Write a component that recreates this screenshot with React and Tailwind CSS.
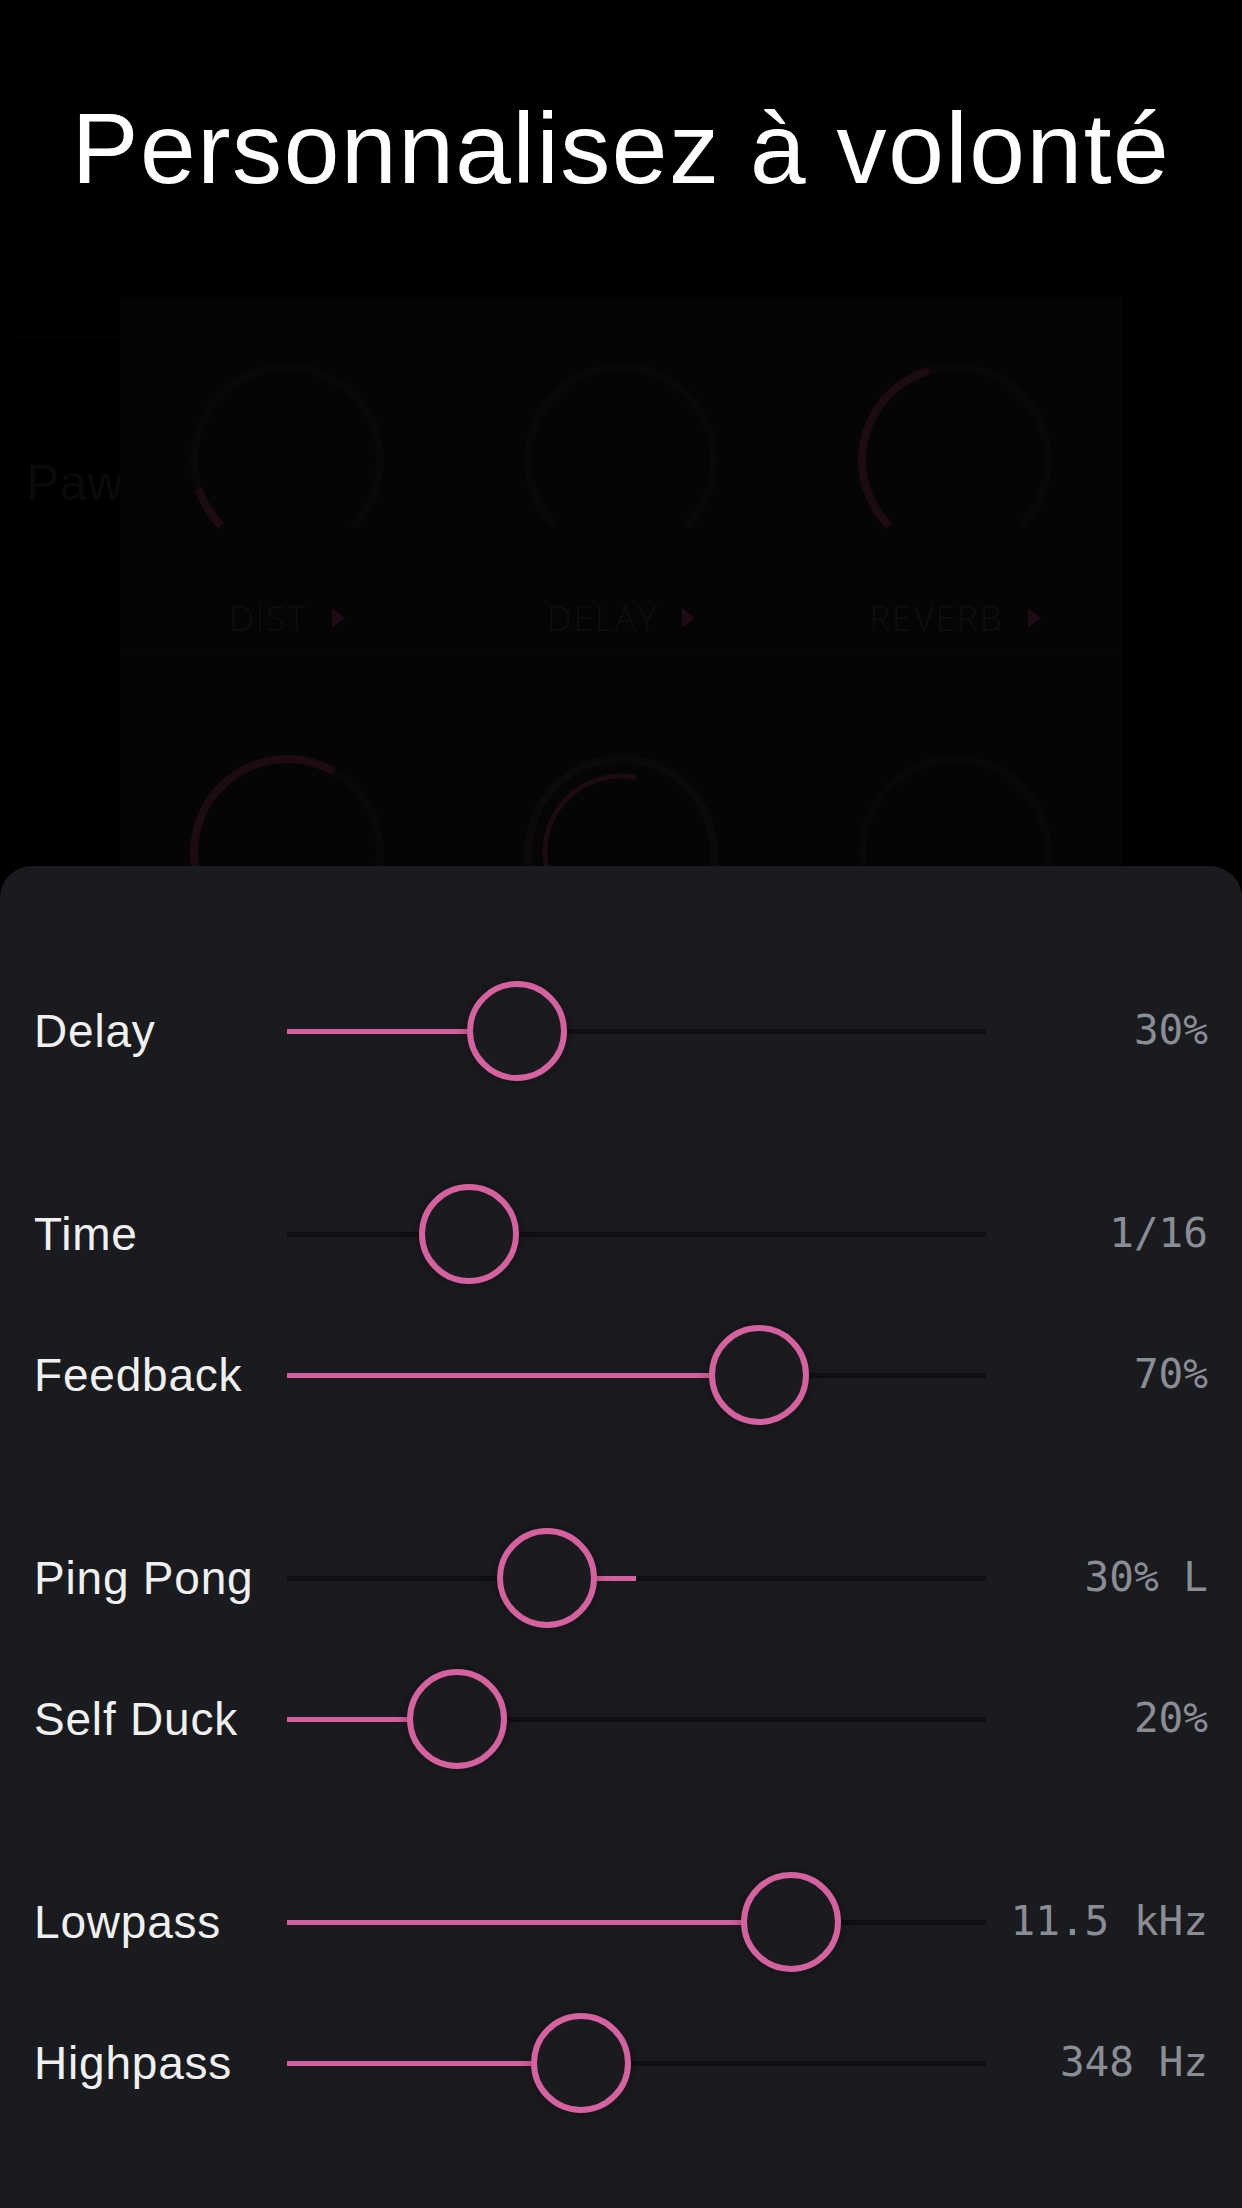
import React from 'react';

const SANS = { fontFamily: '"Liberation Sans", Arial, sans-serif' };
const MONO = { fontFamily: '"DejaVu Sans Mono", "Liberation Mono", monospace' };

// background synth knobs (dimmed behind the sheet)
const knobsTop = [
  { label: 'DIST', value: 0.1 },
  { label: 'DELAY', value: 0 },
  { label: 'REVERB', value: 0.44 },
];

const knobsBottom = [
  { value: 0.61 },
  { value: 0.54, inner: true },
  { value: 0 },
];

const sliders = [
  [{ label: 'Delay', value: '30%', pos: 0.3, fill: 'start' }],
  [
    { label: 'Time', value: '1/16', pos: 0.22, fill: 'none' },
    { label: 'Feedback', value: '70%', pos: 0.705, fill: 'start' },
  ],
  [
    { label: 'Ping Pong', value: '30% L', pos: 0.35, fill: 'center' },
    { label: 'Self Duck', value: '20%', pos: 0.2, fill: 'start' },
  ],
  [
    { label: 'Lowpass', value: '11.5 kHz', pos: 0.758, fill: 'start' },
    { label: 'Highpass', value: '348 Hz', pos: 0.407, fill: 'start' },
  ],
];

const TRACK_W = 699;
const THUMB = 100;

const Knob = ({ value, inner }) => {
  const r = 93;
  const c = 2 * Math.PI * r;
  const ri = 76;
  const ci = 2 * Math.PI * ri;
  return (
    <svg width="200" height="200" viewBox="0 0 200 200">
      <circle
        cx="100" cy="100" r={r} fill="none"
        stroke={inner ? '#090a0c' : '#080808'} strokeWidth="8"
        strokeDasharray={`${0.75 * c} ${c}`}
        transform="rotate(135 100 100)"
      />
      {!inner && value > 0 && (
        <circle
          cx="100" cy="100" r={r} fill="none"
          stroke="#1d0b14" strokeWidth="8"
          strokeDasharray={`${value * 0.75 * c} ${c}`}
          transform="rotate(135 100 100)"
        />
      )}
      {inner && (
        <circle
          cx="100" cy="100" r={ri} fill="none"
          stroke="#1d0b14" strokeWidth="5"
          strokeDasharray={`${value * 0.75 * ci} ${ci}`}
          transform="rotate(135 100 100)"
        />
      )}
    </svg>
  );
};

const Slider = ({ label, value, pos, fill }) => {
  const center = THUMB / 2 + pos * (TRACK_W - THUMB);
  const mid = TRACK_W / 2;
  let fillStyle = null;
  if (fill === 'start') fillStyle = { left: 0, width: center };
  if (fill === 'center') {
    fillStyle = center < mid
      ? { left: center, width: mid - center }
      : { left: mid, width: center - mid };
  }

  return (
    <div className="flex items-center h-[100px]">
      <div className="w-[253px] text-[46px] tracking-[0.8px] text-[#f0f0f0]" style={SANS}>
        {label}
      </div>
      <div className="relative w-[699px] h-[100px] flex items-center">
        <div className="w-full h-[5px] bg-[#0e0f11]" />
        {fillStyle && (
          <div className="absolute top-[47.5px] h-[5px] bg-[#d5619f]" style={fillStyle} />
        )}
        <div
          className="absolute top-0 w-[100px] h-[100px] rounded-full border-[6px] border-[#d5619f] bg-[#1a1b1f] shadow-[0_0_14px_rgba(0,0,0,0.35)]"
          style={{ left: center - THUMB / 2 }}
        />
      </div>
      <div className="flex-1 text-right text-[41px] text-[#8b8d95]" style={MONO}>
        {value}
      </div>
    </div>
  );
};

export default function App() {
  return (
    <div className="w-[1242px] h-[2208px] bg-black flex flex-col overflow-hidden">
      {/* Title */}
      <div className="h-[297px] pt-[98px] shrink-0">
        <h1
          className="text-center text-white text-[100px] leading-none tracking-[1.6px]"
          style={SANS}
        >
          Personnalisez à volonté
        </h1>
      </div>

      {/* Dimmed synth behind the sheet */}
      <div className="h-[569px] shrink-0 flex overflow-hidden">
        <div className="w-[120px] shrink-0 overflow-hidden">
          <div className="mt-[40px] ml-[18px] h-px bg-[#070707]" />
          <div
            className="mt-[108px] ml-[26px] text-[50px] font-light text-[#0a0a0a] whitespace-nowrap"
            style={SANS}
          >
            Paw
          </div>
        </div>

        <div className="w-[1002px] shrink-0 bg-[#050505]">
          <div className="h-[354px] grid grid-cols-3 border-b border-[#080808]">
            {knobsTop.map((k) => (
              <div key={k.label} className="flex flex-col items-center pt-[63px]">
                <Knob value={k.value} />
                <div className="mt-[38px] h-[40px] flex items-center gap-[24px]">
                  <span
                    className="text-[35px] font-light tracking-[2px] text-[#0f0f0f]"
                    style={{ fontFamily: '"Open Sans", sans-serif' }}
                  >
                    {k.label}
                  </span>
                  <svg width="13" height="20" viewBox="0 0 13 20">
                    <path d="M0 0 L13 10 L0 20 Z" fill="#1f0b16" />
                  </svg>
                </div>
              </div>
            ))}
          </div>
          <div className="grid grid-cols-3">
            {knobsBottom.map((k, i) => (
              <div key={i} className="flex flex-col items-center pt-[101px]">
                <Knob value={k.value} inner={k.inner} />
              </div>
            ))}
          </div>
        </div>

        <div className="flex-1" />
      </div>

      {/* Bottom sheet */}
      <div className="flex-1 bg-[#1a1b1f] rounded-t-[32px] pl-[34px] pr-[34px] pt-[115px] flex flex-col gap-[103px]">
        {sliders.map((group, gi) => (
          <div key={gi} className="flex flex-col gap-[41px]">
            {group.map((s) => (
              <Slider key={s.label} {...s} />
            ))}
          </div>
        ))}
      </div>
    </div>
  );
}
